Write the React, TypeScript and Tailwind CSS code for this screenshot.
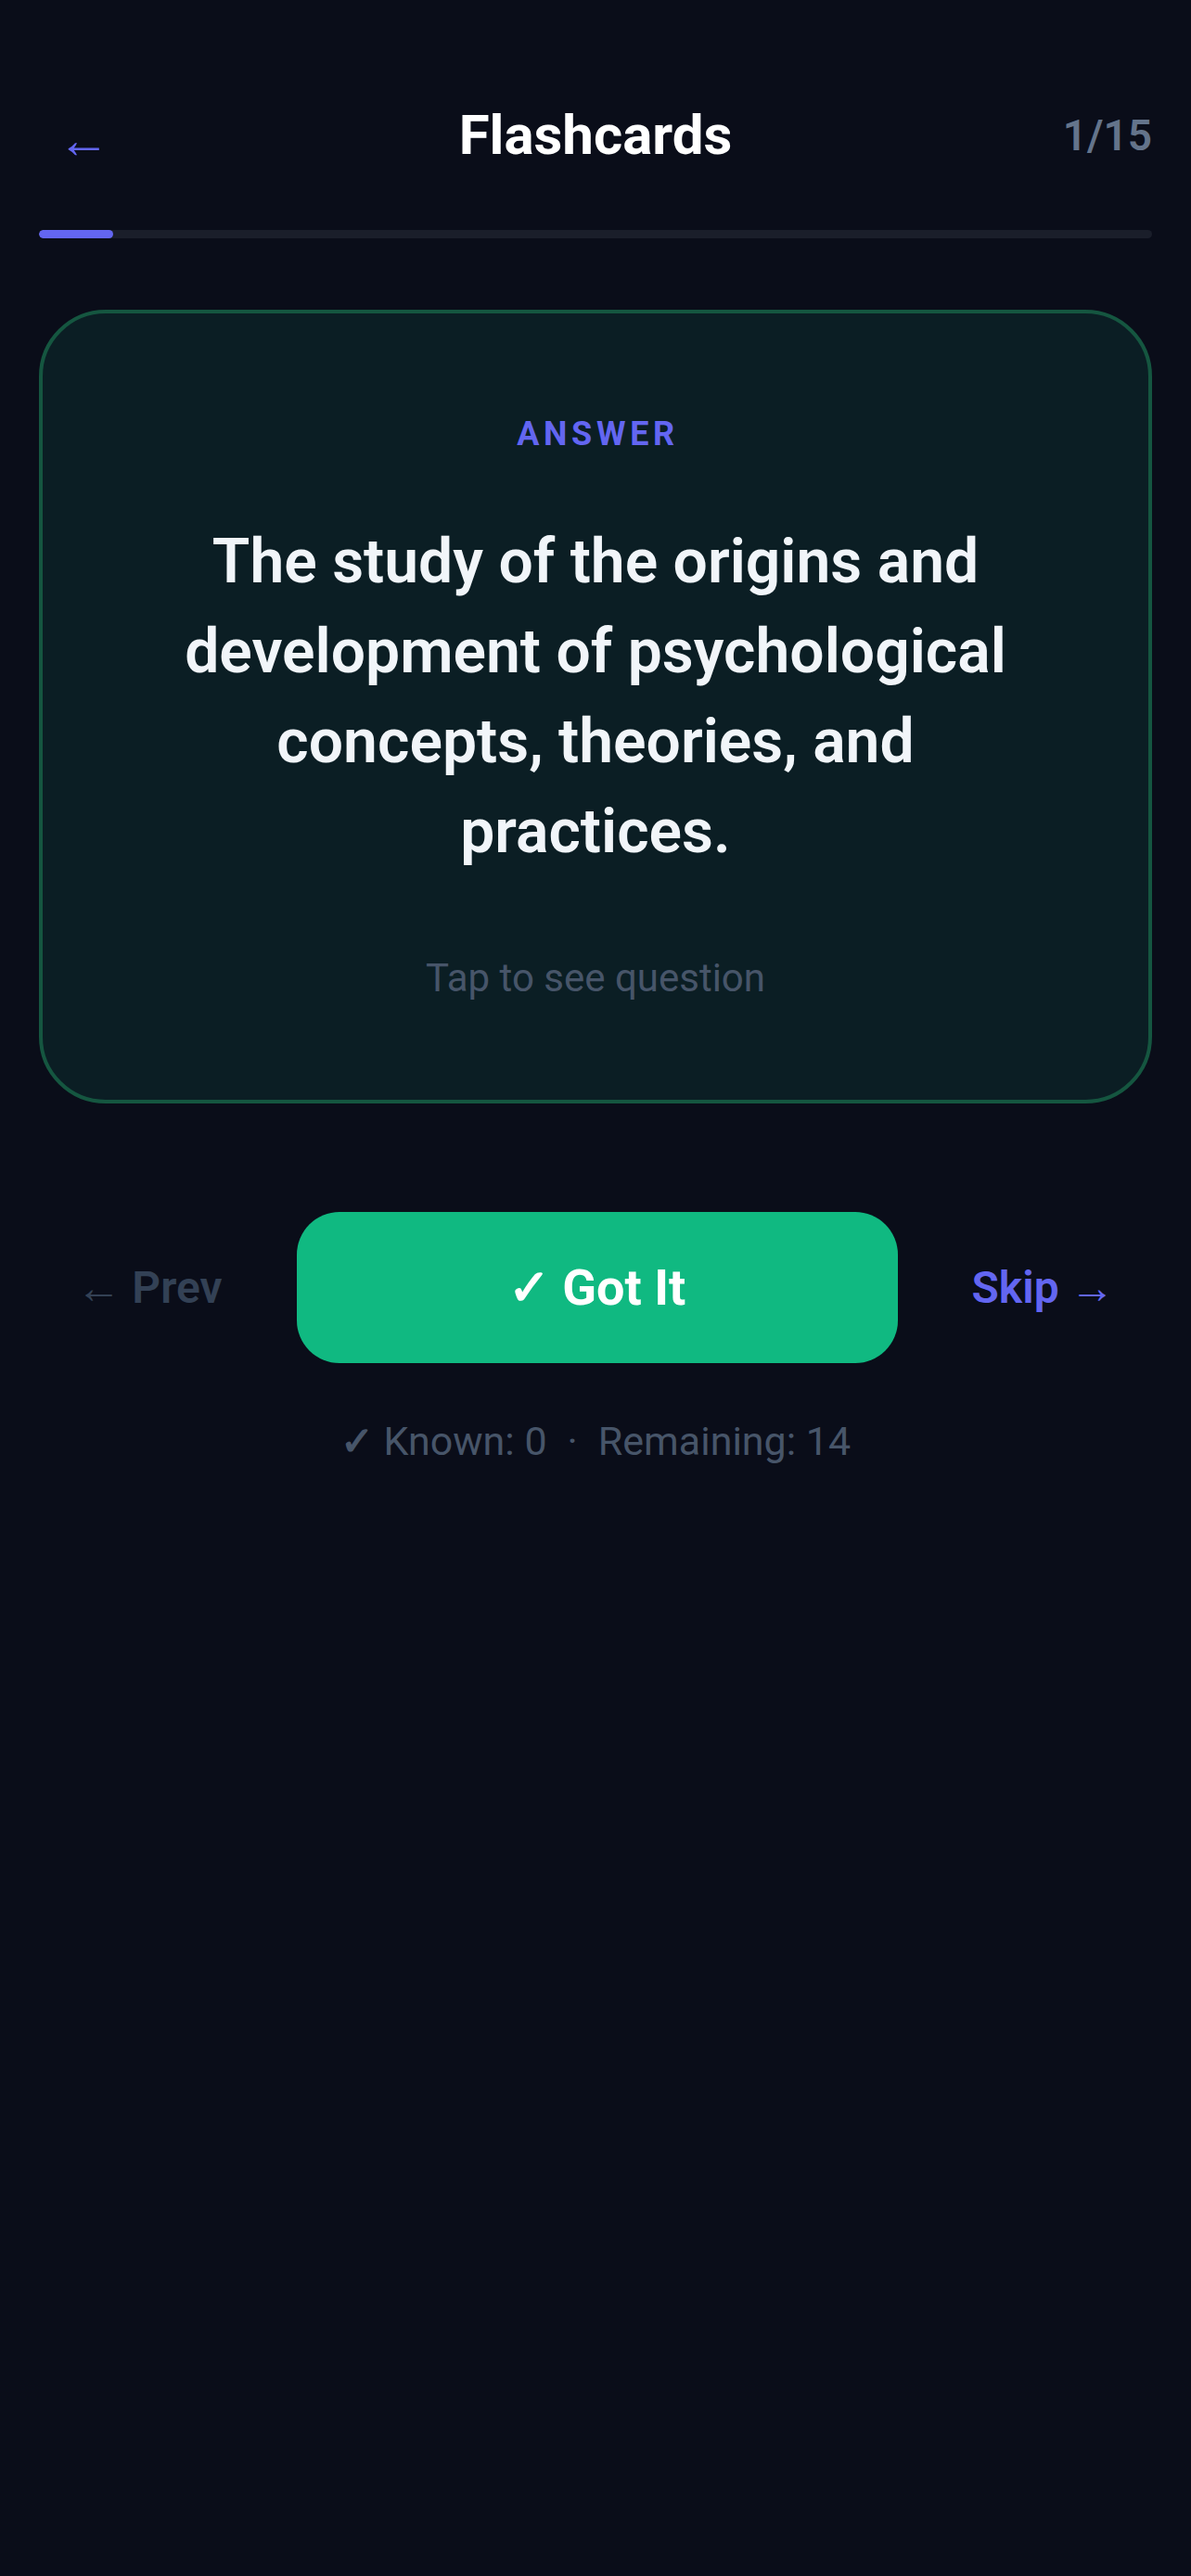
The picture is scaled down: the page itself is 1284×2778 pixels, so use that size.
import { useState } from 'react';

const cards = [
  {
    q: 'What is the history of psychology?',
    a: 'The study of the origins and development of psychological concepts, theories, and practices.',
  },
];

export default function App() {
  const [index] = useState(0);
  const [showAnswer, setShowAnswer] = useState(true);
  const total = 15;
  const known = 0;
  const card = cards[index];

  return (
    <div className="min-h-screen w-full bg-[#0a0d19] font-['Roboto',sans-serif] px-[42px] pt-[110px] pb-[40px]">
      {/* header */}
      <div className="grid grid-cols-[1fr_auto_1fr] items-center h-[72px]">
        <button className="justify-self-start pl-[20px] pt-[10px] text-[56px] leading-none text-[#6366f1]">←</button>
        <h1 className="text-[60px] leading-[72px] font-bold text-white">Flashcards</h1>
        <span className="justify-self-end text-[46px] font-semibold text-[#64748b]">
          {index + 1}/{total}
        </span>
      </div>

      {/* progress */}
      <div className="mt-[66px] h-[9px] w-full rounded-full bg-[#1a1e2a] overflow-hidden">
        <div className="h-full rounded-full bg-[#6366f1]" style={{ width: `${((index + 1) / total) * 100}%` }} />
      </div>

      {/* card */}
      <div
        onClick={() => setShowAnswer((s) => !s)}
        className="mt-[77px] rounded-[72px] border-[4px] border-[#155640] bg-[#0b1e24] px-[96px] pt-[112px] pb-[107px] flex flex-col items-center text-center cursor-pointer"
      >
        <p className="pl-[5px] text-[36px] leading-[36px] font-bold tracking-[0.13em] text-[#6366f1]">
          {showAnswer ? 'ANSWER' : 'QUESTION'}
        </p>
        <p className="mt-[71px] max-w-[920px] text-[66px] leading-[97px] font-semibold text-[#f1f5f9]">
          {showAnswer ? card.a : card.q}
        </p>
        <p className="mt-[86px] text-[42px] leading-[48px] text-[#475569]">
          Tap to see {showAnswer ? 'question' : 'answer'}
        </p>
      </div>

      {/* actions */}
      <div className="mt-[117px] flex items-center justify-center gap-[80px]">
        <button className="text-[48px] font-semibold text-[#334155]">← Prev</button>
        <button className="w-[648px] h-[163px] rounded-[46px] bg-[#10b981] text-white text-[54px] font-bold">
          ✓ Got It
        </button>
        <button className="text-[48px] font-semibold text-[#6366f1]">Skip →</button>
      </div>

      <p className="mt-[53px] text-center text-[43px] leading-[63px] text-[#475569]">
        <span className="font-bold">✓</span> Known: {known}
        <span className="mx-[22px]">·</span>
        Remaining: {total - 1 - known}
      </p>
    </div>
  );
}
